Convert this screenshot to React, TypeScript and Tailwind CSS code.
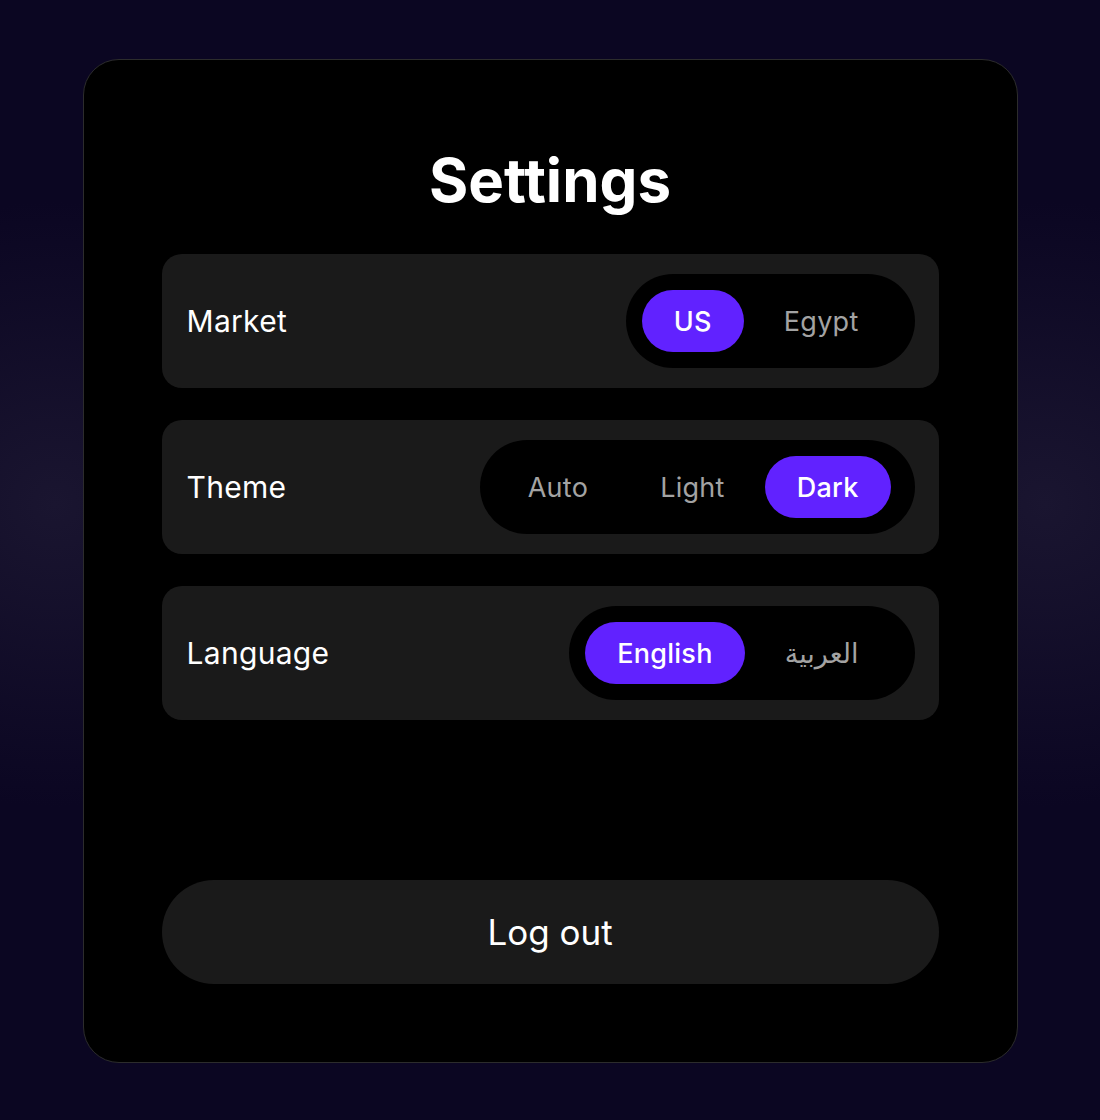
import React, { useState } from "react";

type Option = { id: string; label: string };

const ROWS: { id: string; label: string; options: Option[]; initial: string }[] = [
    {
        id: "market",
        label: "Market",
        options: [
            { id: "us", label: "US" },
            { id: "eg", label: "Egypt" },
        ],
        initial: "us",
    },
    {
        id: "theme",
        label: "Theme",
        options: [
            { id: "auto", label: "Auto" },
            { id: "light", label: "Light" },
            { id: "dark", label: "Dark" },
        ],
        initial: "dark",
    },
    {
        id: "lang",
        label: "Language",
        options: [
            { id: "en", label: "English" },
            { id: "ar", label: "العربية" },
        ],
        initial: "en",
    },
];

function Segmented({ options, value, onChange }: { options: Option[]; value: string; onChange: (v: string) => void }) {
    return (
        <div className="flex items-center gap-2 rounded-full bg-black py-4 pl-4 pr-6">
            {options.map((o) => (
                <button
                    key={o.id}
                    onClick={() => onChange(o.id)}
                    className={`h-[62px] rounded-full px-8 text-[27px] leading-none tracking-[0.01em] ${
                        o.id === value ? "bg-[#6122ff] font-medium text-white" : "text-[#a3a3a3]"
                    }`}
                >
                    {o.label}
                </button>
            ))}
        </div>
    );
}

export default function App() {
    const [values, setValues] = useState<Record<string, string>>(
        Object.fromEntries(ROWS.map((r) => [r.id, r.initial]))
    );

    return (
        <main
            className="min-h-screen bg-[#0b0622] bg-[radial-gradient(circle_at_5%_45%,#1a1530_0%,transparent_25%),radial-gradient(circle_at_95%_45%,#1a1530_0%,transparent_25%)] pt-[59px] pb-[57px] flex justify-center"
            style={{ fontFamily: '"Inter", "DejaVu Sans", sans-serif' }}
        >
            <div className="flex h-[1004px] w-[935px] flex-col rounded-[36px] border border-[#2c2c2c] bg-black px-[78px] pt-[78px] pb-[78px]">
                <h1 className="mb-8 text-center text-[60px] font-bold leading-[84px] text-white">Settings</h1>

                <div className="flex flex-col gap-8">
                    {ROWS.map((r) => (
                        <div key={r.id} className="flex h-[134px] items-center justify-between rounded-[20px] bg-[#1a1a1a] pl-[25px] pr-6">
                            <span className="text-[30px] tracking-[0.01em] text-white">{r.label}</span>
                            <Segmented
                                options={r.options}
                                value={values[r.id]}
                                onChange={(v) => setValues((s) => ({ ...s, [r.id]: v }))}
                            />
                        </div>
                    ))}
                </div>

                <button className="mt-auto h-[104px] w-full rounded-full bg-[#1a1a1a] text-[35px] text-white">Log out</button>
            </div>
        </main>
    );
}
